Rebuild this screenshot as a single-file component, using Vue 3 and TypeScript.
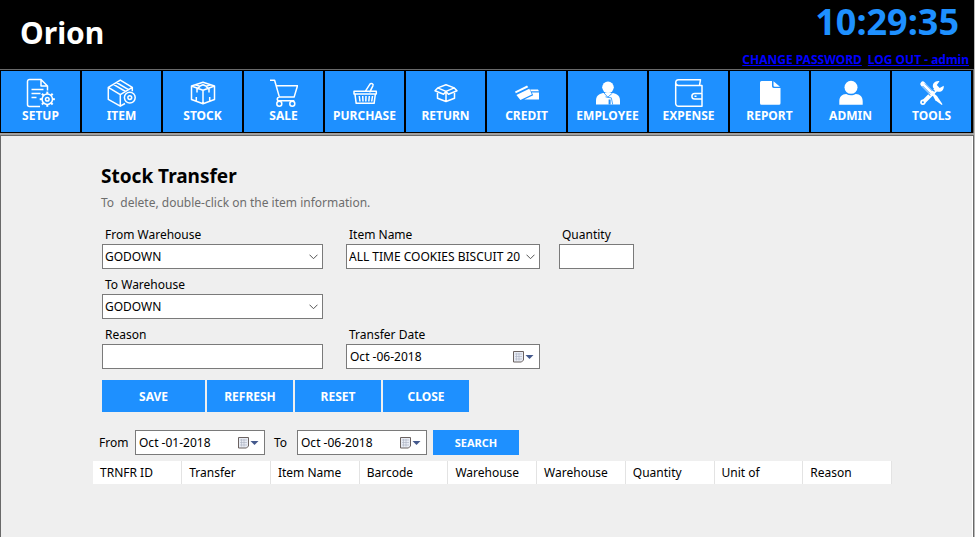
<script setup lang="ts">
import { ref } from 'vue'

const menu: string[] = [
  'SETUP', 'ITEM', 'STOCK', 'SALE', 'PURCHASE', 'RETURN',
  'CREDIT', 'EMPLOYEE', 'EXPENSE', 'REPORT', 'ADMIN', 'TOOLS',
]
const columns: string[] = [
  'TRNFR ID', 'Transfer', 'Item Name', 'Barcode', 'Warehouse',
  'Warehouse', 'Quantity', 'Unit of', 'Reason',
]
const gearTeeth: number[] = [0, 45, 90, 135, 180, 225, 270, 315]

const fromWarehouse = ref('GODOWN')
const toWarehouse = ref('GODOWN')
const item = ref('ALL TIME COOKIES BISCUIT 200G')
const quantity = ref('')
const reason = ref('')
const transferDate = ref('Oct -06-2018')
const fromDate = ref('Oct -01-2018')
const toDate = ref('Oct -06-2018')
</script>

<template>
  <div class="app">
    <header class="top">
      <div class="brand">Orion</div>
      <div class="session">
        <div class="clock">10:29:35</div>
        <div class="links">
          <a href="#password">CHANGE PASSWORD</a>
          <a href="#logout">LOG OUT - admin</a>
        </div>
      </div>
    </header>

    <nav class="menu">
      <button v-for="name in menu" :key="name" type="button" class="tile">
        <svg class="icon" viewBox="0 0 29 30" aria-hidden="true">
          <g v-if="name === 'SETUP'" class="line">
            <path d="M14 28.5H3.5a2 2 0 0 1-2-2v-23a2 2 0 0 1 2-2H15l6.5 6.5v4.5M15 1.5V8h6.5M5.5 11.5h12M5.5 15.5h9M5.5 19.5h5" />
            <circle cx="21.3" cy="21.2" r="5.2" />
            <circle cx="21.3" cy="21.2" r="1.8" />
            <path v-for="a in gearTeeth" :key="a" class="tooth" d="M21.3 16v-2.4" :transform="`rotate(${a} 21.3 21.2)`" />
          </g>
          <g v-else-if="name === 'ITEM'" class="line">
            <path d="M18 25.5 13.3 28.2 1.3 21.3v-12l12-7.2 12 7.2v4M1.3 9.3l12 7.3 12-7.3M13.3 16.6v11.6M6.5 6.3l12 7.2M9.5 4.5l12 7.2" />
            <circle cx="22.8" cy="19.6" r="5.4" />
            <circle cx="22.8" cy="19.6" r="1.9" />
          </g>
          <g v-else-if="name === 'STOCK'" class="line">
            <path d="M15 4.3 26.5 8v13.5L15 25.7 3.5 21.5V8zM3.5 8 15 12.3 26.5 8M15 12.3v13.4M7.5 6.8l4 1.4 3.5-1.5 3.5 1.5 4-1.4M10 10.3l2-1.8M20 10.3l-2-1.8M9 10.2v4.3M21 10.2v4.3M8.3 19v3.6M21.7 19v3.6" />
          </g>
          <g v-else-if="name === 'SALE'" class="line">
            <path d="M1 2.3h4.6l4.8 16.8h14.7l3.4-11.4H7.2M10.4 19.1c-3 .6-2.8 3.6-.4 3.7h15.3" />
            <circle cx="10.3" cy="25.8" r="2.5" />
            <circle cx="23.3" cy="25.8" r="2.5" />
          </g>
          <g v-else-if="name === 'PURCHASE'" class="line">
            <path d="M4 13.3h22.3v2.8H4zM5 16.3l1.2 9h17.9l1.2-9M9.3 18l.7 5.5M12.7 18l.3 5.5M16 18l-.2 5.5M19.3 18l-.5 5.5M22.5 18l-.8 5.5M15.3 13.3l4.5-7c1.3-1.8 4-.4 3.1 1.5l-3.3 6.5" />
          </g>
          <g v-else-if="name === 'RETURN'" class="line">
            <path d="m15 6.7 8.3 3.2L15 13.4 6.7 9.9zM6.7 9.9 4 12.8l8.5 3.4 2.5-2.8 2.5 2.8 8.5-3.4-2.7-2.9M6.5 15v5.2l8.5 3.3 8.5-3.3V15M15 13.4v10" />
          </g>
          <g v-else-if="name === 'CREDIT'" class="solid">
            <path d="M3 13.5 15 7.6l1.3 1.7L3.8 15.2zM4.4 17l12.9-6.2 2.6 5.8L8.4 22zM18.3 11.4H26l1 1.8h-8.3zM19.8 14.6H27v6.9H12.2l9-4.2z" />
          </g>
          <g v-else-if="name === 'EMPLOYEE'">
            <g class="solid">
              <circle cx="15" cy="9.3" r="5.8" />
              <path d="M3 26.4v-4c0-4 2.5-6.6 7-7.4h10c4.5.8 7 3.4 7 7.4v4z" />
            </g>
            <path class="cut" d="m11 15 3.8 4.2 4.7-4.2M12.5 18.8l2.3.6 3.500 .4 1.400 6.600" />
            <path class="gap" d="M16.600 21.500v5" />
          </g>
          <g v-else-if="name === 'EXPENSE'" class="line">
            <path d="M28 14.8V7.500H4.500C.8 7.500.8 1.700 4.500 1.700H26.500l-1 5.600M1.700 4.500v21a2.800 2.800 0 0 0 2.800 2.800H28v-7M28 15.500h-7.300a2.800 2.800 0 0 0 0 5.600H28zM20.500 18.300h2" />
          </g>
          <g v-else-if="name === 'REPORT'" class="solid">
            <path d="M6.5 3H17v5.2a1.800 1.800 0 0 0 1.800 1.800h6.700v15.200a1.500 1.500 0 0 1-1.500 1.500H6.500A1.500 1.500 0 0 1 5 25.200V4.500A1.500 1.500 0 0 1 6.500 3zM18.500 3.300l6.500 5.400h-5.200a1.300 1.300 0 0 1-1.300-1.300z" />
          </g>
          <g v-else-if="name === 'ADMIN'" class="solid">
            <circle cx="15" cy="9.3" r="6.5" />
            <path d="M3.300 26.700v-3.500c0-4.300 2.700-7 6.900-7.200 2.900 1.800 6.700 1.800 9.600 0 4.200.2 6.900 2.900 6.900 7.200v3.500z" />
          </g>
          <g v-else>
            <path class="shaft" d="M7 23.500 19 11.500" />
            <circle class="solid" cx="5.900" cy="24.200" r="2.700" />
            <path class="solid" d="M22.500 3.200 19.800 7l2.900 3 4-2.300c.7 4.500-3.200 7.300-6.700 5.700l-3.800-3.700C14.800 6.200 18 2.500 22.500 3.200z" />
            <circle class="hole" cx="5.900" cy="24.200" r="1" />
            <path class="edge" d="m7.500 7.500 8 8" />
            <path class="grip" d="m5.800 6 9.200 9.300" />
            <path class="edge groove" d="m5.500 8 7.500 7.500M8 5.500l7.500 7.500" />
            <path class="solid" d="m15.500 17 1.500-1.500 3 2.500 5.500 8.300-.7.700-6.500-4.800z" />
          </g>
        </svg>
        <span>{{ name }}</span>
      </button>
    </nav>

    <main class="page">
      <h1>Stock Transfer</h1>
      <p class="hint">To&nbsp; delete, double-click on the item information.</p>

      <form class="form" @submit.prevent>
        <div class="field first">
          <label for="from-wh">From Warehouse</label>
          <select id="from-wh" v-model="fromWarehouse" class="box pick"><option>GODOWN</option></select>
        </div>
        <div class="field">
          <label for="item">Item Name</label>
          <select id="item" v-model="item" class="box pick"><option>ALL TIME COOKIES BISCUIT 200G</option></select>
        </div>
        <div class="field">
          <label for="qty">Quantity</label>
          <input id="qty" v-model="quantity" class="box" type="text">
        </div>
        <div class="field first">
          <label for="to-wh">To Warehouse</label>
          <select id="to-wh" v-model="toWarehouse" class="box pick"><option>GODOWN</option></select>
        </div>
        <div class="field first">
          <label for="reason">Reason</label>
          <input id="reason" v-model="reason" class="box" type="text">
        </div>
        <div class="field">
          <label for="t-date">Transfer Date</label>
          <div class="box date">
            <input id="t-date" v-model="transferDate" type="text">
            <button type="button" aria-label="Open calendar">
              <svg viewBox="0 0 22 14" aria-hidden="true"><path class="sheet" d="M1.5 1.5h10v8.500l-2 2h-8z" /><path class="days" d="M3 4h7M3 6.500h7M3 9h7M4.500 3v7.500M7 3v7.500" /><path class="arrow" d="M13.500 5h8l-4 4z" /></svg>
            </button>
          </div>
        </div>
      </form>

      <div class="actions">
        <button type="button" class="btn save">SAVE</button>
        <button type="button" class="btn">REFRESH</button>
        <button type="button" class="btn">RESET</button>
        <button type="button" class="btn">CLOSE</button>
      </div>

      <div class="filter">
        <label for="f-date">From</label>
        <div class="box date">
          <input id="f-date" v-model="fromDate" type="text">
          <button type="button" aria-label="Open calendar">
            <svg viewBox="0 0 22 14" aria-hidden="true"><path class="sheet" d="M1.5 1.5h10v8.500l-2 2h-8z" /><path class="days" d="M3 4h7M3 6.500h7M3 9h7M4.500 3v7.500M7 3v7.500" /><path class="arrow" d="M13.500 5h8l-4 4z" /></svg>
          </button>
        </div>
        <label for="u-date" class="to">To</label>
        <div class="box date">
          <input id="u-date" v-model="toDate" type="text">
          <button type="button" aria-label="Open calendar">
            <svg viewBox="0 0 22 14" aria-hidden="true"><path class="sheet" d="M1.5 1.5h10v8.500l-2 2h-8z" /><path class="days" d="M3 4h7M3 6.500h7M3 9h7M4.500 3v7.500M7 3v7.500" /><path class="arrow" d="M13.500 5h8l-4 4z" /></svg>
          </button>
        </div>
        <button type="button" class="btn search">SEARCH</button>
      </div>

      <table class="grid">
        <thead>
          <tr><th v-for="(c, i) in columns" :key="i" scope="col">{{ c }}</th></tr>
        </thead>
      </table>
    </main>
  </div>
</template>

<style>
body {
  background: #efefef;
}
</style>

<style scoped>
.app {
  display: flex;
  flex-direction: column;
  min-height: 100vh;
  box-sizing: border-box;
  border-right: 1px solid #b8b8b8;
  font-family: "Noto Sans", "Open Sans", sans-serif;
  font-size: 12px;
  color: #000;
}
button,
input,
select {
  font: inherit;
  color: inherit;
  margin: 0;
  box-sizing: border-box;
}
.top {
  display: flex;
  justify-content: space-between;
  height: 69px;
  padding: 0 5px 0 20px;
  background: #000;
}
.brand {
  color: #fff;
  font-size: 30px;
  font-weight: 700;
  line-height: 66px;
}
.session {
  display: flex;
  flex-direction: column;
  align-items: flex-end;
}
.clock {
  padding-right: 10px;
  color: #1e90ff;
  font-size: 36px;
  font-weight: 700;
  line-height: 44px;
}
.links {
  display: flex;
  gap: 6px;
  padding-top: 8px;
  font-weight: 700;
  line-height: 16px;
}
.links a {
  color: #00f;
  text-decoration: underline;
  text-decoration-thickness: 1px;
  text-decoration-skip-ink: none;
}
.menu {
  display: grid;
  grid-template-columns: repeat(12, 1fr);
  gap: 2px;
  padding: 1px 2px 1px 1px;
  border-top: 1px solid #696969;
  border-right: 1px solid #696969;
  background: #000;
}
.tile {
  display: flex;
  flex-direction: column;
  align-items: center;
  height: 61px;
  padding: 7px 0 0;
  border: 0;
  background: #1e90ff;
  color: #fff;
  font-weight: 700;
  line-height: 16px;
}
.icon {
  flex: none;
  width: 29px;
  height: 30px;
}
.line,
.cut,
.edge,
.grip,
.shaft,
.gap {
  fill: none;
  stroke: #fff;
  stroke-width: 1.5;
  stroke-linejoin: round;
}
.tooth {
  stroke-width: 2;
}
.solid {
  fill: #fff;
}
.cut {
  stroke: #1e90ff;
  stroke-width: 0.8;
}
.gap {
  stroke: #1e90ff;
  stroke-width: 2;
}
.hole {
  fill: #1e90ff;
}
.shaft {
  stroke-width: 4;
}
.edge {
  stroke: #1e90ff;
  stroke-width: 7;
}
.grip {
  stroke-width: 5;
  stroke-linecap: round;
}
.groove {
  stroke-width: 1;
}
.page {
  flex: 1;
  padding: 28px 80px 24px 92px;
  border: solid #696969;
  border-width: 1px 1px 0 1px;
  margin-top: 2px;
  box-shadow: 0 -2px 0 #a0a0a0, inset -1px 0 0 #fff;
}
h1 {
  margin: 0;
  padding-left: 8px;
  font-size: 19px;
  font-weight: 700;
  line-height: 24px;
}
.hint {
  margin: 7px 0 14px;
  padding-left: 8px;
  color: #6d6d6d;
  line-height: 16px;
}
.form {
  display: grid;
  grid-template-columns: 225px 194px 75px;
  column-gap: 19px;
  row-gap: 6px;
  padding-left: 9px;
}
.field {
  display: flex;
  flex-direction: column;
}
.first {
  grid-column: 1;
  padding-right: 4px;
}
.field label {
  padding-left: 3px;
  line-height: 19px;
}
.box {
  width: 100%;
  height: 25px;
  padding: 0 3px;
  border: 1px solid #7a7a7a;
  border-radius: 0;
  background: #fff;
  outline: 0;
}
.pick {
  appearance: none;
  padding: 0 19px 0 2px;
  background: #fff url("data:image/svg+xml,%3Csvg xmlns='http://www.w3.org/2000/svg' width='9' height='6'%3E%3Cpath d='M.5.7l4 4 4-4' fill='none' stroke='%23555'/%3E%3C/svg%3E") no-repeat right 4px center;
}
.date {
  display: flex;
  align-items: center;
  box-sizing: border-box;
  padding-right: 5px;
}
.date input {
  flex: 1;
  width: 0;
  height: 23px;
  padding: 0;
  border: 0;
  background: none;
  outline: 0;
}
.date button {
  display: flex;
  padding: 0;
  border: 0;
  background: none;
}
.date svg {
  width: 22px;
  height: 14px;
}
.sheet {
  fill: #e8ecf4;
  stroke: #6b6260;
}
.days {
  fill: none;
  stroke: #a9b0c0;
  stroke-width: 0.6;
}
.arrow {
  fill: #44598c;
}
.actions {
  display: flex;
  gap: 2px;
  padding: 11px 0 0 9px;
}
.btn {
  width: 86px;
  height: 32px;
  padding: 0;
  border: 0;
  background: #1e90ff;
  color: #fff;
  font-weight: 700;
}
.save {
  width: 103px;
}
.filter {
  display: flex;
  align-items: center;
  padding: 18px 0 6px 6px;
}
.filter label {
  width: 36px;
}
.filter .to {
  width: 23px;
  padding-left: 9px;
}
.filter .date {
  width: 130px;
}
.search {
  width: 86px;
  height: 25px;
  margin-left: 6px;
  font-size: 11px;
}
.grid {
  width: 799px;
  border-collapse: collapse;
  table-layout: fixed;
}
.grid th {
  height: 23px;
  padding: 0 0 0 7px;
  border-right: 1px solid #e3e3e3;
  background: #fff;
  font-weight: 400;
  text-align: left;
  line-height: 16px;
}
</style>
